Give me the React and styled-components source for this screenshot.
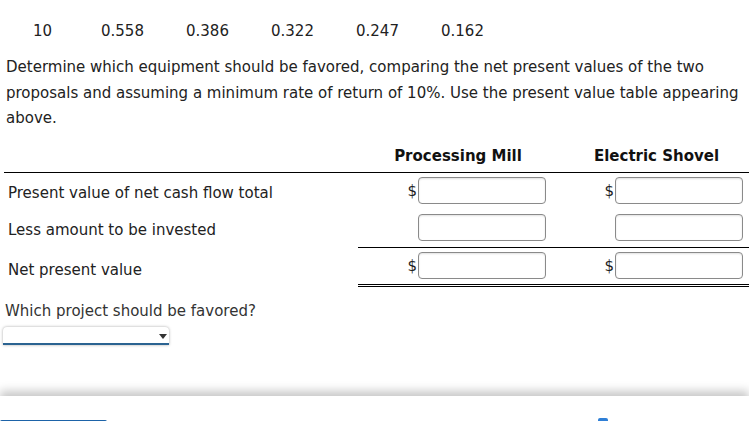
import React from "react";
import styled, { createGlobalStyle } from "styled-components";

const GlobalStyle = createGlobalStyle`
  html, body {
    margin: 0;
    padding: 0;
    background: #fff;
    overflow: hidden;
  }
  body {
    font-family: "DejaVu Sans", Verdana, sans-serif;
    font-size: 15px;
    color: #222;
  }
`;

const factorRows = [
  { period: "9", values: ["0.592", "0.424", "0.361", "0.284", "0.194"] },
  { period: "10", values: ["0.558", "0.386", "0.322", "0.247", "0.162"] },
];

const npvRows = [
  { label: "Present value of net cash flow total", dollar: true, rule: "none", height: 36, nudge: 4 },
  { label: "Less amount to be invested", dollar: false, rule: "single", height: 39, nudge: 4 },
  { label: "Net present value", dollar: true, rule: "double", height: 36, nudge: 8 },
];

const Page = styled.div`
  width: 749px;
  height: 421px;
  overflow: hidden;
`;

const FactorTable = styled.div`
  margin-top: -22px;
  padding-left: 5px;
  display: grid;
  row-gap: 2px;
`;

const FactorRow = styled.div`
  display: grid;
  grid-template-columns: 75px repeat(5, 85px);
  height: 34px;
  align-items: center;
  text-align: center;
`;

const Prompt = styled.p`
  margin: 7px 0 0;
  padding: 0 6px;
  line-height: 25.5px;
`;

const NpvTable = styled.div`
  margin: 6px 0 0 4px;
  width: 751px;
`;

const TableRow = styled.div`
  display: grid;
  grid-template-columns: 354px 200px 197px;
  height: ${(p) => p.$height}px;
  border-bottom: ${(p) => (p.$ruled ? "1px solid #000" : "none")};
`;

const HeadCell = styled.div`
  display: flex;
  align-items: center;
  justify-content: center;
  padding-top: 2px;
  font-weight: bold;
  color: #111;
`;

const LabelCell = styled.div`
  display: flex;
  align-items: center;
  padding: ${(p) => p.$nudge}px 0 0 4px;
`;

const AmountCell = styled.div`
  display: flex;
  align-items: center;
  justify-content: flex-end;
  padding-right: 12px;
  box-sizing: border-box;
  border-bottom: ${(p) =>
    p.$rule === "single" ? "1px solid #000" : p.$rule === "double" ? "3px double #000" : "none"};
  height: ${(p) => (p.$rule === "double" ? "calc(100% + 3px)" : "100%")};
`;

const Dollar = styled.span`
  margin-right: 1px;
  color: #222;
`;

const AmountInput = styled.input`
  width: 128px;
  height: 27px;
  box-sizing: border-box;
  border: 1px solid #8a8a8a;
  border-radius: 4px;
  box-shadow: inset 0 1px 2px rgba(0, 0, 0, 0.12);
  font: inherit;
  padding: 0 4px;
  background: #fff;
`;

const Question = styled.div`
  margin: 18px 0 0 5px;
  line-height: 18px;
  color: #333;
`;

const Select = styled.div`
  position: relative;
  margin: 7px 0 0 3px;
  width: 166px;
  height: 16px;
  background: #fff;
  border-radius: 4px 4px 0 0;
  box-shadow: 0 0 3px rgba(0, 0, 0, 0.35);
  border-bottom: 2px solid #2b6391;
`;

const Caret = styled.span`
  position: absolute;
  right: 2px;
  top: 7px;
  width: 0;
  height: 0;
  border-left: 4px solid transparent;
  border-right: 4px solid transparent;
  border-top: 5px solid #333;
`;

const Footer = styled.div`
  margin-top: 51px;
  height: 60px;
  background: #fff;
  box-shadow: 0 -5px 9px rgba(0, 0, 0, 0.22);
  display: flex;
  align-items: flex-start;
  padding-top: 24px;
`;

const PrimaryButton = styled.div`
  width: 107px;
  height: 36px;
  background: #1d63a8;
  border-radius: 2px 2px 0 0;
`;

const NavIcon = styled.div`
  margin: -2px 0 0 491px;
  width: 10px;
  height: 10px;
  background: #2f7fd6;
  border-radius: 2px 2px 0 0;
`;

export default function App() {
  return (
    <Page>
      <GlobalStyle />
      <FactorTable>
        {factorRows.map((row) => (
          <FactorRow key={row.period}>
            <span>{row.period}</span>
            {row.values.map((v, i) => (
              <span key={i}>{v}</span>
            ))}
          </FactorRow>
        ))}
      </FactorTable>

      <Prompt>
        Determine which equipment should be favored, comparing the net present values of the two
        proposals and assuming a minimum rate of return of 10%. Use the present value table appearing
        above.
      </Prompt>

      <NpvTable>
        <TableRow $height={34} $ruled>
          <div />
          <HeadCell>Processing Mill</HeadCell>
          <HeadCell>Electric Shovel</HeadCell>
        </TableRow>
        {npvRows.map((row) => (
          <TableRow key={row.label} $height={row.height}>
            <LabelCell $nudge={row.nudge}>{row.label}</LabelCell>
            {[0, 1].map((c) => (
              <AmountCell key={c} $rule={row.rule}>
                {row.dollar && <Dollar>$</Dollar>}
                <AmountInput type="text" aria-label={row.label} />
              </AmountCell>
            ))}
          </TableRow>
        ))}
      </NpvTable>

      <Question>Which project should be favored?</Question>
      <Select>
        <Caret />
      </Select>

      <Footer>
        <PrimaryButton />
        <NavIcon />
      </Footer>
    </Page>
  );
}
